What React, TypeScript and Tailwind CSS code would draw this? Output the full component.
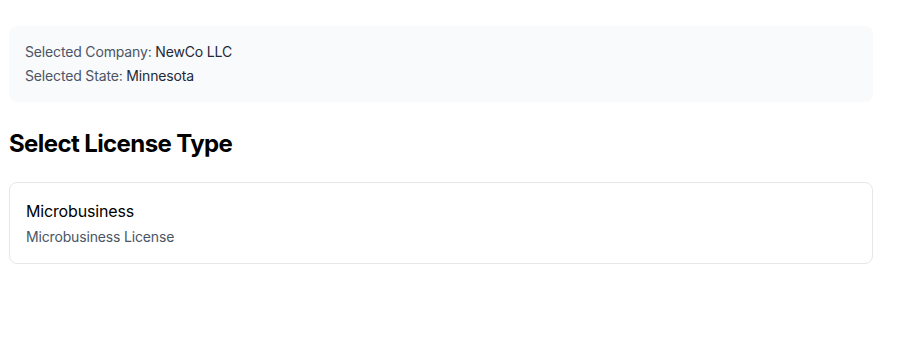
import React from "react";

const LICENSES = [{ name: "Microbusiness", description: "Microbusiness License" }];

export default function App() {
  return (
    <div className="min-h-screen bg-white font-['Inter',sans-serif] tracking-[-0.01em]">
      <div className="w-[864px] ml-[9px] pt-[26px]">
        <div className="bg-gray-50 rounded-lg p-4 space-y-1 text-sm">
          <p className="text-gray-600">
            Selected Company: <span className="text-gray-800">NewCo LLC</span>
          </p>
          <p className="text-gray-600">
            Selected State: <span className="text-gray-800">Minnesota</span>
          </p>
        </div>
        <h2 className="mt-[26px] mb-[22px] text-2xl font-bold tracking-tight text-black">
          Select License Type
        </h2>
        <div className="space-y-3">
          {LICENSES.map((l) => (
            <button
              key={l.name}
              className="w-full text-left border border-gray-200 rounded-lg p-4 bg-white"
            >
              <p className="text-base text-black">{l.name}</p>
              <p className="mt-1 text-sm text-gray-600">{l.description}</p>
            </button>
          ))}
        </div>
      </div>
    </div>
  );
}
